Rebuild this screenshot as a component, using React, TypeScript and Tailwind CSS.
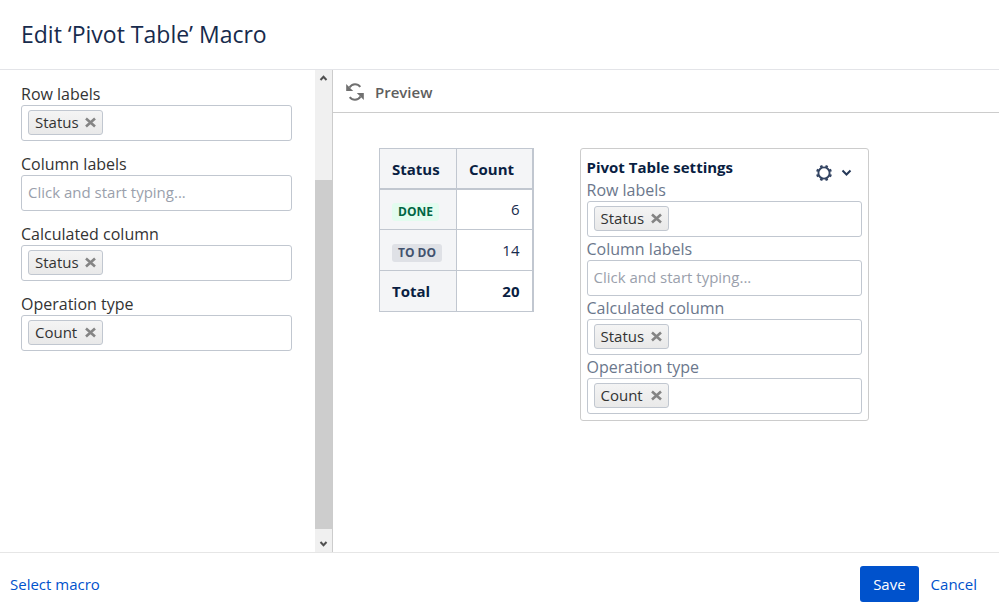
import { useId, useState } from "react";

type FieldData = { label: string; value?: string };

const fields: FieldData[] = [
  { label: "Row labels", value: "Status" },
  { label: "Column labels" },
  { label: "Calculated column", value: "Status" },
  { label: "Operation type", value: "Count" },
];

function TokenField({ label, value, labelClass }: FieldData & { labelClass: string }) {
  const id = useId();
  const [token, setToken] = useState(value);
  return (
    <div>
      <label htmlFor={id} className={`block text-base ${labelClass}`}>
        {label}
      </label>
      <div className="flex h-9 items-center rounded-[3px] border border-[#c1c7d0] bg-white px-1.5">
        {token && (
          <span className="mb-0.5 flex h-[25px] w-[75px] shrink-0 items-center justify-between rounded-[3px] border border-[#c1c7d0] bg-linear-to-b from-[#f4f4f4] to-[#e9e9e9] px-1.5 text-[#333]">
            {token}
            <button type="button" aria-label={`Remove ${token}`} onClick={() => setToken(undefined)}>
              <svg width="11" height="11" viewBox="0 0 11 11" className="block">
                <path d="M1 1.5l9 8M10 1.5l-9 8" stroke="#848484" strokeWidth="2.6" />
              </svg>
            </button>
          </span>
        )}
        <input
          id={id}
          type="text"
          placeholder={token ? undefined : "Click and start typing..."}
          className="h-full w-full min-w-0 flex-1 bg-transparent pb-0.5 outline-none placeholder:text-[#9a9fac]"
        />
      </div>
    </div>
  );
}

function ScrollBar() {
  return (
    <div aria-hidden="true" className="flex w-[17px] shrink-0 flex-col items-center bg-[#f0f0f0]">
      <svg width="9" height="17" viewBox="0 0 9 17">
        <path d="M1.5 10l3-3.2 3 3.2" fill="none" stroke="#505050" strokeWidth="2" />
      </svg>
      <div className="h-[93px]" />
      <div className="w-full flex-1 bg-[#cdcdcd]" />
      <svg width="9" height="23" viewBox="0 0 9 23">
        <path d="M1.5 13l3 3.2 3-3.2" fill="none" stroke="#505050" strokeWidth="2" />
      </svg>
    </div>
  );
}

function RefreshIcon() {
  return (
    <svg width="20" height="20" viewBox="0 0 20 20" fill="none" stroke="#707070" strokeWidth="2">
      <path d="M4.5 5.5C5.8 3.3 7.700 2.200 10 2.200c2.200 0 4 .9 5.300 2.600" />
      <path d="M15.5 14.5c-1.300 2.200-3.200 3.300-5.500 3.300-2.200 0-4-.9-5.300-2.600" />
      <path d="M1.2 2v7h7l-2.300-2.300z" fill="#707070" stroke="none" />
      <path d="M18.8 18v-7h-7l2.300 2.300z" fill="#707070" stroke="none" />
    </svg>
  );
}

function GearIcon() {
  const teeth = [22.5, 67.5, 112.5, 157.5, 202.5, 247.5, 292.5, 337.5];
  return (
    <svg width="18" height="18" viewBox="0 0 18 18" fill="none" stroke="#344563">
      <circle cx="9" cy="9" r="5.6" strokeWidth="1.9" />
      {teeth.map((a) => (
        <path key={a} d="M9 3.4V1" strokeWidth="2.6" transform={`rotate(${a} 9 9)`} />
      ))}
    </svg>
  );
}

export default function App() {
  return (
    <div className="flex min-h-screen flex-col bg-white font-['Open_Sans','Noto_Sans',sans-serif] text-[15px] leading-5 text-[#172b4d]">
      <header className="flex h-[70px] items-center border-b border-[#e3e4e8] px-[21px] pb-0.5">
        <h1 className="text-[23px] leading-7 text-[#172b4d]">Edit ‘Pivot Table’ Macro</h1>
      </header>

      <main className="flex flex-1">
        <form className="flex w-1/3 shrink-0 border-r border-[#cccccc]">
          <div className="flex min-w-0 flex-1 flex-col gap-3.5 pt-[15px] pr-[23px] pl-[21px]">
            {fields.map((f) => (
              <TokenField key={f.label} {...f} labelClass="text-[#333] leading-[18px] pb-0.5" />
            ))}
          </div>
          <ScrollBar />
        </form>

        <section className="flex min-w-0 flex-1 flex-col">
          <div className="flex h-[43px] items-center gap-2.5 border-b border-[#cccccc] px-3 pt-0.5">
            <button type="button" aria-label="Refresh preview">
              <RefreshIcon />
            </button>
            <h2 className="font-semibold text-[#5e5e5e]">Preview</h2>
          </div>

          <div className="flex items-start gap-[46px] pt-[35px] pl-[46px]">
            <table className="border-collapse border border-r-2 border-[#c1c7d0]">
              <thead>
                <tr className="h-10 border-b-2 border-[#c1c7d0] bg-[#f4f5f7] text-left text-[#091e42]">
                  <th scope="col" className="w-[77px] border-r border-[#c1c7d0] px-3 pt-0.5 font-bold">Status</th>
                  <th scope="col" className="w-[76px] px-3 pt-0.5 font-bold">Count</th>
                </tr>
              </thead>
              <tbody>
                <tr className="h-[41px] border-b border-[#c1c7d0]">
                  <th scope="row" className="border-r border-[#c1c7d0] bg-[#f4f5f7] px-3 pt-0.5 text-left">
                    <span className="inline-block rounded-[3px] bg-[#e3fcef] px-1.5 text-xs leading-[18px] font-bold text-[#006644]">DONE</span>
                  </th>
                  <td className="px-3 text-right">6</td>
                </tr>
                <tr className="h-[41px] border-b border-[#c1c7d0]">
                  <th scope="row" className="border-r border-[#c1c7d0] bg-[#f4f5f7] px-3 pt-0.5 text-left whitespace-nowrap">
                    <span className="inline-block rounded-[3px] bg-[#dfe1e6] px-1.5 text-xs leading-[18px] font-bold text-[#42526e]">TO DO</span>
                  </th>
                  <td className="px-3 text-right">14</td>
                </tr>
                <tr className="h-[41px] text-[#091e42]">
                  <th scope="row" className="border-r border-[#c1c7d0] bg-[#f4f5f7] px-3 text-left font-bold">Total</th>
                  <td className="px-3 text-right font-bold">20</td>
                </tr>
              </tbody>
            </table>

            <form className="w-[289px] rounded-[3px] border border-[#cccccc] px-1.5 pt-2 pb-1.5">
              <div className="flex h-[21px] items-start justify-between">
                <h3 className="font-bold text-[#091e42]">Pivot Table settings</h3>
                <button type="button" aria-label="Settings menu" className="flex items-center gap-2 pt-[7px] pr-2.5">
                  <GearIcon />
                  <svg width="11" height="8" viewBox="0 0 11 8" fill="none">
                    <path d="M1.5 1.5l4 4 4-4" stroke="#253858" strokeWidth="2" />
                  </svg>
                </button>
              </div>
              {fields.map((f) => (
                <TokenField key={f.label} {...f} labelClass="text-[#6b778c] leading-[21px] pt-0.5" />
              ))}
            </form>
          </div>
        </section>
      </main>

      <footer className="flex h-[56px] items-center justify-between border-t border-[#e6e6e6] pt-1.5 pr-[22px] pl-2.5">
        <a href="#select" className="text-[#0052cc]">Select macro</a>
        <div className="flex items-center gap-3">
          <button type="button" className="h-9 rounded-[3px] bg-[#0052cc] px-[13px] text-white">Save</button>
          <a href="#cancel" className="text-[#0052cc]">Cancel</a>
        </div>
      </footer>
    </div>
  );
}
